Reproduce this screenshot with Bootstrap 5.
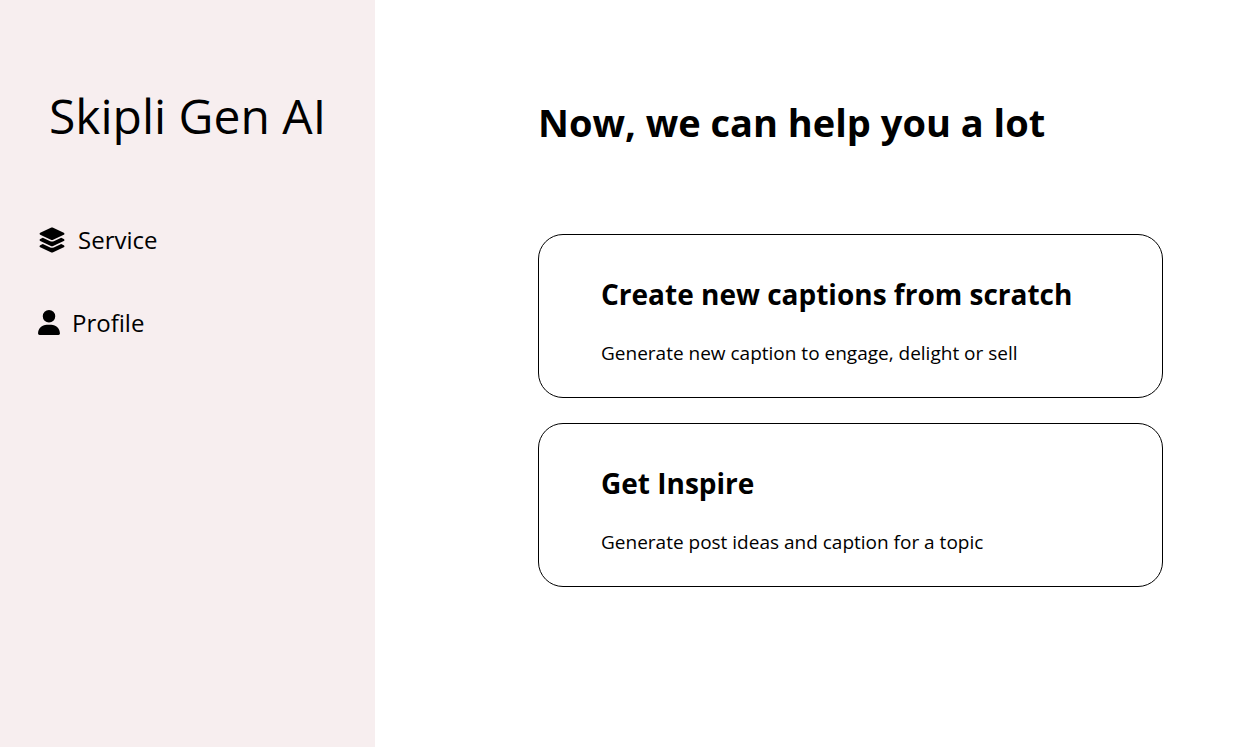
<!DOCTYPE html>
<html lang="en">
<head>
<meta charset="utf-8">
<meta name="viewport" content="width=device-width, initial-scale=1">
<title>Skipli Gen AI</title>
<link href="https://cdn.jsdelivr.net/npm/bootstrap@5.3.0/dist/css/bootstrap.min.css" rel="stylesheet">
<style>
body { font-family: "Segoe UI", "Open Sans", "Noto Sans", sans-serif; color: #000; background: #fff; }
.sidebar { flex: 0 0 375px; background: #f7eeef; padding: 80px 38px 0; }
.brand { font-size: 48px; line-height: 72px; font-weight: 400; text-align: center; white-space: nowrap; margin: 0 -38px 70px; }
.menu { gap: 48px; }
.menu-item { font-size: 24px; line-height: 35px; font-weight: 400; color: #000; text-decoration: none; gap: 12px; }
.main-area { padding: 92px 97px 40px 163px; }
.page-title { font-size: 38px; line-height: 60px; font-weight: 700; margin: 0 0 82px; }
.choices { gap: 25px; }
.choice { border: 1px solid #000; border-radius: 25px; padding: 38px 62px 30px; color: #000; text-decoration: none; }
.choice-title { font-size: 28px; line-height: 42px; font-weight: 700; margin: 0 0 24px; }
.choice-text { font-size: 19px; line-height: 28px; font-weight: 400; margin: 0; }
</style>
</head>
<body>
<div class="d-flex min-vh-100">
  <aside class="sidebar">
    <h1 class="brand">Skipli Gen AI</h1>
    <nav class="menu d-flex flex-column">
      <a class="menu-item d-flex align-items-center" href="#service">
        <svg width="28" height="28" viewBox="0 0 576 512" aria-hidden="true"><path d="M264.500 5.200c14.900-6.900 32.100-6.900 47 0l218.600 101c8.500 3.900 13.900 12.400 13.900 21.800s-5.400 17.900-13.900 21.800l-218.600 101c-14.900 6.900-32.100 6.900-47 0L45.900 149.800C37.400 145.800 32 137.300 32 128s5.400-17.900 13.900-21.800L264.500 5.200zM476.900 209.600l53.200 24.600c8.500 3.900 13.900 12.400 13.900 21.800s-5.400 17.900-13.900 21.800l-218.600 101c-14.900 6.900-32.100 6.900-47 0L45.900 277.800C37.400 273.800 32 265.300 32 256s5.400-17.900 13.900-21.800l53.200-24.600 152 70.200c23.400 10.800 50.400 10.800 73.800 0l152-70.200zm-152 198.200l152-70.200 53.200 24.600c8.500 3.900 13.900 12.400 13.900 21.800s-5.400 17.900-13.900 21.800l-218.600 101c-14.900 6.900-32.100 6.900-47 0L45.900 405.800C37.400 401.800 32 393.300 32 384s5.400-17.900 13.900-21.800l53.200-24.600 152 70.200c23.400 10.800 50.400 10.800 73.800 0z"/></svg>
        <span>Service</span>
      </a>
      <a class="menu-item d-flex align-items-center" href="#profile">
        <svg width="22" height="25" viewBox="0 0 448 512" aria-hidden="true"><path d="M224 256A128 128 0 1 0 224 0a128 128 0 1 0 0 256zm-45.700 48C79.800 304 0 383.800 0 482.300 0 498.700 13.300 512 29.700 512h388.600c16.400 0 29.700-13.300 29.700-29.700C448 383.800 368.200 304 269.700 304h-91.400z"/></svg>
        <span>Profile</span>
      </a>
    </nav>
  </aside>
  <main class="main-area flex-grow-1">
    <h2 class="page-title">Now, we can help you a lot</h2>
    <div class="choices d-flex flex-column">
      <a class="choice d-block" href="#captions">
        <h3 class="choice-title">Create new captions from scratch</h3>
        <p class="choice-text">Generate new caption to engage, delight or sell</p>
      </a>
      <a class="choice d-block" href="#inspire">
        <h3 class="choice-title">Get Inspire</h3>
        <p class="choice-text">Generate post ideas and caption for a topic</p>
      </a>
    </div>
  </main>
</div>
<script src="https://cdn.jsdelivr.net/npm/bootstrap@5.3.0/dist/js/bootstrap.bundle.min.js"></script>
</body>
</html>
